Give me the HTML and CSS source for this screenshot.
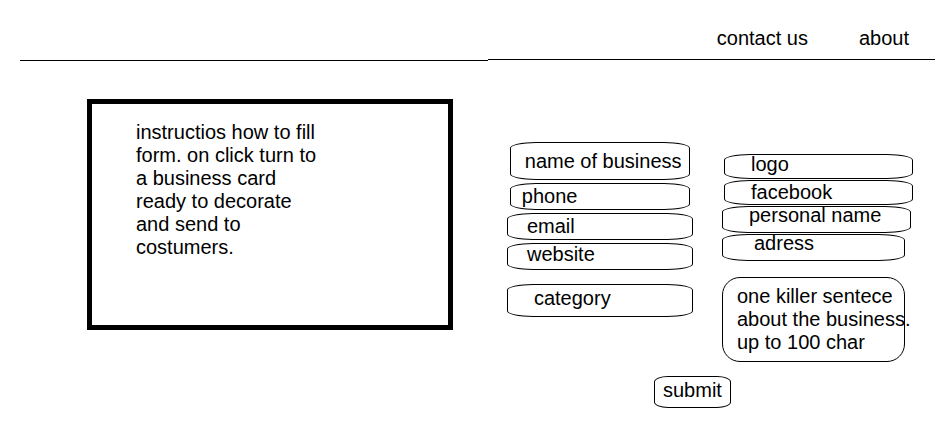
FILE: index.html
```html
<!DOCTYPE html>
<html lang="en">
<head>
  <meta charset="utf-8">
  <title>Business card form</title>
  <link rel="stylesheet" href="styles.css">
</head>
<body>
  <header>
    <nav class="nav">
      <a href="#contact">contact us</a>
      <a href="#about">about</a>
    </nav>
    <div class="rule"><span class="rule-start"></span><span class="rule-end"></span></div>
  </header>
  <main class="page">
    <section class="card">
      <p>instructios how to fill form. on click turn to a business card ready to decorate and send to costumers.</p>
    </section>
    <form class="form">
      <div class="column">
        <div class="field tall narrow indent-s"><input id="business" type="text"><label for="business">name of business</label></div>
        <div class="field narrow indent-xs"><input id="phone" type="tel"><label for="phone">phone</label></div>
        <div class="field indent-m"><input id="email" type="email"><label for="email">email</label></div>
        <div class="field raised indent-m"><input id="website" type="text"><label for="website">website</label></div>
        <div class="field medium raised indent-l apart"><input id="category" type="text"><label for="category">category</label></div>
      </div>
      <div class="column column-end">
        <div class="field short raised indent-l"><input id="logo" type="text"><label for="logo">logo</label></div>
        <div class="field short indent-l"><input id="facebook" type="text"><label for="facebook">facebook</label></div>
        <div class="field lifted indent-l"><input id="person" type="text"><label for="person">personal name</label></div>
        <div class="field narrow lifted indent-xl"><input id="adress" type="text"><label for="adress">adress</label></div>
        <div class="field narrow message indent-s apart"><textarea id="sentence" maxlength="100"></textarea><label for="sentence">one killer sentece<br>about the business.<br>up to 100 char</label></div>
      </div>
      <button class="submit" type="submit">submit</button>
    </form>
  </main>
</body>
</html>
```
FILE: styles.css
```css
* {
  box-sizing: border-box;
}

body {
  margin: 0;
  background: #fff;
  color: #000;
  font: 20px/23px "Liberation Sans", Arial, sans-serif;
}

.nav {
  display: flex;
  justify-content: flex-end;
  gap: 51px;
  padding: 27px 27px 9px;
}

.nav a {
  color: inherit;
  text-decoration: none;
}

.rule {
  display: flex;
  height: 2px;
  margin: 0 1px 0 20px;
}

.rule span {
  height: 1px;
  background: #000;
}

.rule-start {
  flex: 468;
  align-self: flex-end;
}

.rule-end {
  flex: 447;
  align-self: flex-start;
}

.page {
  display: grid;
  grid-template-columns: 366fr 407fr;
  align-items: start;
  gap: 53px;
  padding: 38px 23px 24px 87px;
}

.card {
  min-height: 231px;
  padding: 17px 44px;
  border: 5px solid #000;
}

.card p {
  max-width: 184px;
  margin: 0;
}

.form {
  display: grid;
  grid-template-columns: 188fr 192fr;
  column-gap: 27px;
  row-gap: 14px;
  padding-top: 43px;
}

.column {
  display: flex;
  flex-direction: column;
  align-items: center;
  gap: 3px;
}

.column-end {
  align-items: flex-start;
  gap: 1px;
  padding: 12px 0 0 1px;
}

.field {
  display: grid;
  grid-template: 100% / 100%;
  align-items: center;
  width: 99%;
  height: 27px;
}

.field input,
.field textarea,
.field label {
  grid-area: 1 / 1;
}

.field input,
.field textarea {
  width: 100%;
  height: 100%;
  min-width: 0;
  margin: 0;
  padding: 0 12px;
  border: 1px solid #000;
  border-radius: 26px / 6px;
  background: #fff;
  font: inherit;
  resize: none;
}

.field label {
  z-index: 1;
  justify-self: start;
  white-space: nowrap;
  pointer-events: none;
}

.narrow { width: 96%; }

.short {
  height: 25px;
  margin-left: 2px;
}

.medium { height: 33px; }
.tall { height: 38px; }
.message { height: 85px; }

.field.message textarea { border-radius: 18px; }

.column .apart { margin-top: 11px; }
.column-end .apart { margin-top: 15px; }

.raised label { padding-bottom: 4px; }
.lifted label { padding-bottom: 8px; }

.indent-xs label { padding-left: 12px; }
.indent-s label { padding-left: 15px; }
.indent-m label { padding-left: 20px; }
.indent-l label { padding-left: 27px; }
.indent-xl label { padding-left: 32px; }

.submit {
  grid-column: 1 / -1;
  justify-self: start;
  height: 32px;
  margin-left: 148px;
  padding: 0 8px 4px;
  border: 1px solid #000;
  border-radius: 14px / 6px;
  background: #fff;
  color: inherit;
  font: inherit;
}
```
